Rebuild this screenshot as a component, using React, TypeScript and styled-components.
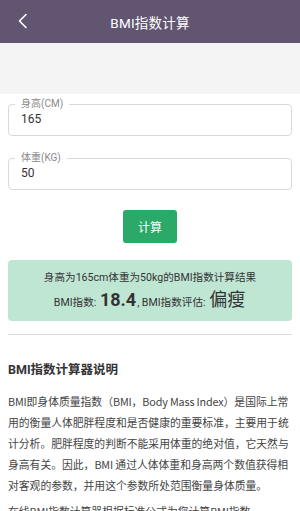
import React from "react";
import styled, { createGlobalStyle } from "styled-components";

const Global = createGlobalStyle`
  html, body { margin: 0; padding: 0; background: #ffffff; }
  body {
    font-family: Roboto, "Noto Sans CJK SC", "Noto Sans", sans-serif;
    color: #333333;
  }
  * { box-sizing: border-box; }
`;

const Page = styled.div`
  width: 300px;
  height: 511px;
  overflow: hidden;
  background: #ffffff;
`;

const Header = styled.header`
  height: 43px;
  background: #615571;
  display: flex;
  align-items: center;
  justify-content: center;
  position: relative;
`;

const BackButton = styled.button`
  position: absolute;
  left: 12px;
  top: 10px;
  width: 22px;
  height: 22px;
  padding: 0;
  border: 0;
  background: transparent;
  display: flex;
  align-items: center;
  justify-content: center;
  cursor: pointer;
`;

const Title = styled.h1`
  margin: 0;
  font-size: 13.5px;
  font-weight: 400;
  color: #ffffff;
  letter-spacing: 0.2px;
`;

const Band = styled.div`
  height: 51px;
  background: #f4f4f4;
`;

const Content = styled.main`
  padding: 0 8px;
`;

const Field = styled.fieldset<{ $top: number }>`
  margin: ${(p) => p.$top}px 0 0;
  padding: 0 12px 7px;
  border: 1px solid #d9d9d9;
  border-radius: 4px;
  min-width: 0;
`;

const Legend = styled.legend`
  margin-left: -6px;
  padding: 0 6px;
  font-size: 10px;
  line-height: 12px;
  color: #8a8a8a;
`;

const Input = styled.input`
  display: block;
  width: 100%;
  height: 18px;
  border: 0;
  outline: none;
  padding: 0;
  font-family: inherit;
  font-size: 12px;
  color: #333333;
  background: transparent;
`;

const ButtonRow = styled.div`
  display: flex;
  justify-content: center;
  margin-top: 20px;
`;

const CalcButton = styled.button`
  width: 54px;
  height: 33px;
  border: 0;
  border-radius: 3px;
  background: #2aa968;
  color: #ffffff;
  font-family: inherit;
  font-size: 12px;
  cursor: pointer;
`;

const Result = styled.section`
  margin-top: 17px;
  height: 61px;
  background: #bfe6d3;
  border-radius: 4px;
  display: flex;
  flex-direction: column;
  align-items: center;
  justify-content: center;
  gap: 4px;
  color: #333333;
`;

const ResultLine = styled.div`
  font-size: 10.6px;
  line-height: 18px;
  white-space: nowrap;
`;

const Big = styled.span<{ $bold?: boolean }>`
  font-size: 18px;
  font-weight: ${(p) => (p.$bold ? 700 : 400)};
  margin: 0 1px;
`;

const Divider = styled.hr`
  margin: 13px 0 0;
  border: 0;
  border-top: 1px solid #dcdcdc;
`;

const Heading = styled.h2`
  margin: 26px 0 0;
  font-size: 12.5px;
  line-height: 18px;
  font-weight: 700;
  color: #333333;
`;

const Paragraph = styled.p<{ $top: number }>`
  margin: ${(p) => p.$top}px 0 0;
  font-family: "Noto Sans CJK SC", Roboto, sans-serif;
  font-size: 10.8px;
  line-height: 21px;
  color: #444444;
`;

const Term = styled.span`
  letter-spacing: -0.15px;
`;

export default function App() {
  return (
    <Page>
      <Global />
      <Header>
        <BackButton aria-label="返回">
          <svg width="12" height="16" viewBox="0 0 12 16" fill="none">
            <path d="M9 1.5 L2.5 8 L9 14.5" stroke="#ffffff" strokeWidth="1.6" strokeLinecap="round" strokeLinejoin="round" />
          </svg>
        </BackButton>
        <Title>BMI指数计算</Title>
      </Header>
      <Band />
      <Content>
        <Field $top={4}>
          <Legend>身高(CM)</Legend>
          <Input defaultValue="165" />
        </Field>
        <Field $top={16}>
          <Legend>体重(KG)</Legend>
          <Input defaultValue="50" />
        </Field>
        <ButtonRow>
          <CalcButton>计算</CalcButton>
        </ButtonRow>
        <Result>
          <ResultLine>身高为165cm体重为50kg的BMI指数计算结果</ResultLine>
          <ResultLine>
            BMI指数: <Big $bold>18.4</Big>, BMI指数评估: <Big>偏瘦</Big>
          </ResultLine>
        </Result>
        <Divider />
        <Heading>BMI指数计算器说明</Heading>
        <Paragraph $top={12}>
          <Term>BMI</Term>即身体质量指数（<Term>BMI</Term>，<Term>Body Mass Index</Term>）是国际上常用的衡量人体肥胖程度和是否健康的重要标准，主要用于统计分析。肥胖程度的判断不能采用体重的绝对值，它天然与身高有关。因此，<Term>BMI</Term> 通过人体体重和身高两个数值获得相对客观的参数，并用这个参数所处范围衡量身体质量。
        </Paragraph>
        <Paragraph $top={5}>
          在线<Term>BMI</Term>指数计算器根据标准公式为您计算<Term>BMI</Term>指数。
        </Paragraph>
      </Content>
    </Page>
  );
}
